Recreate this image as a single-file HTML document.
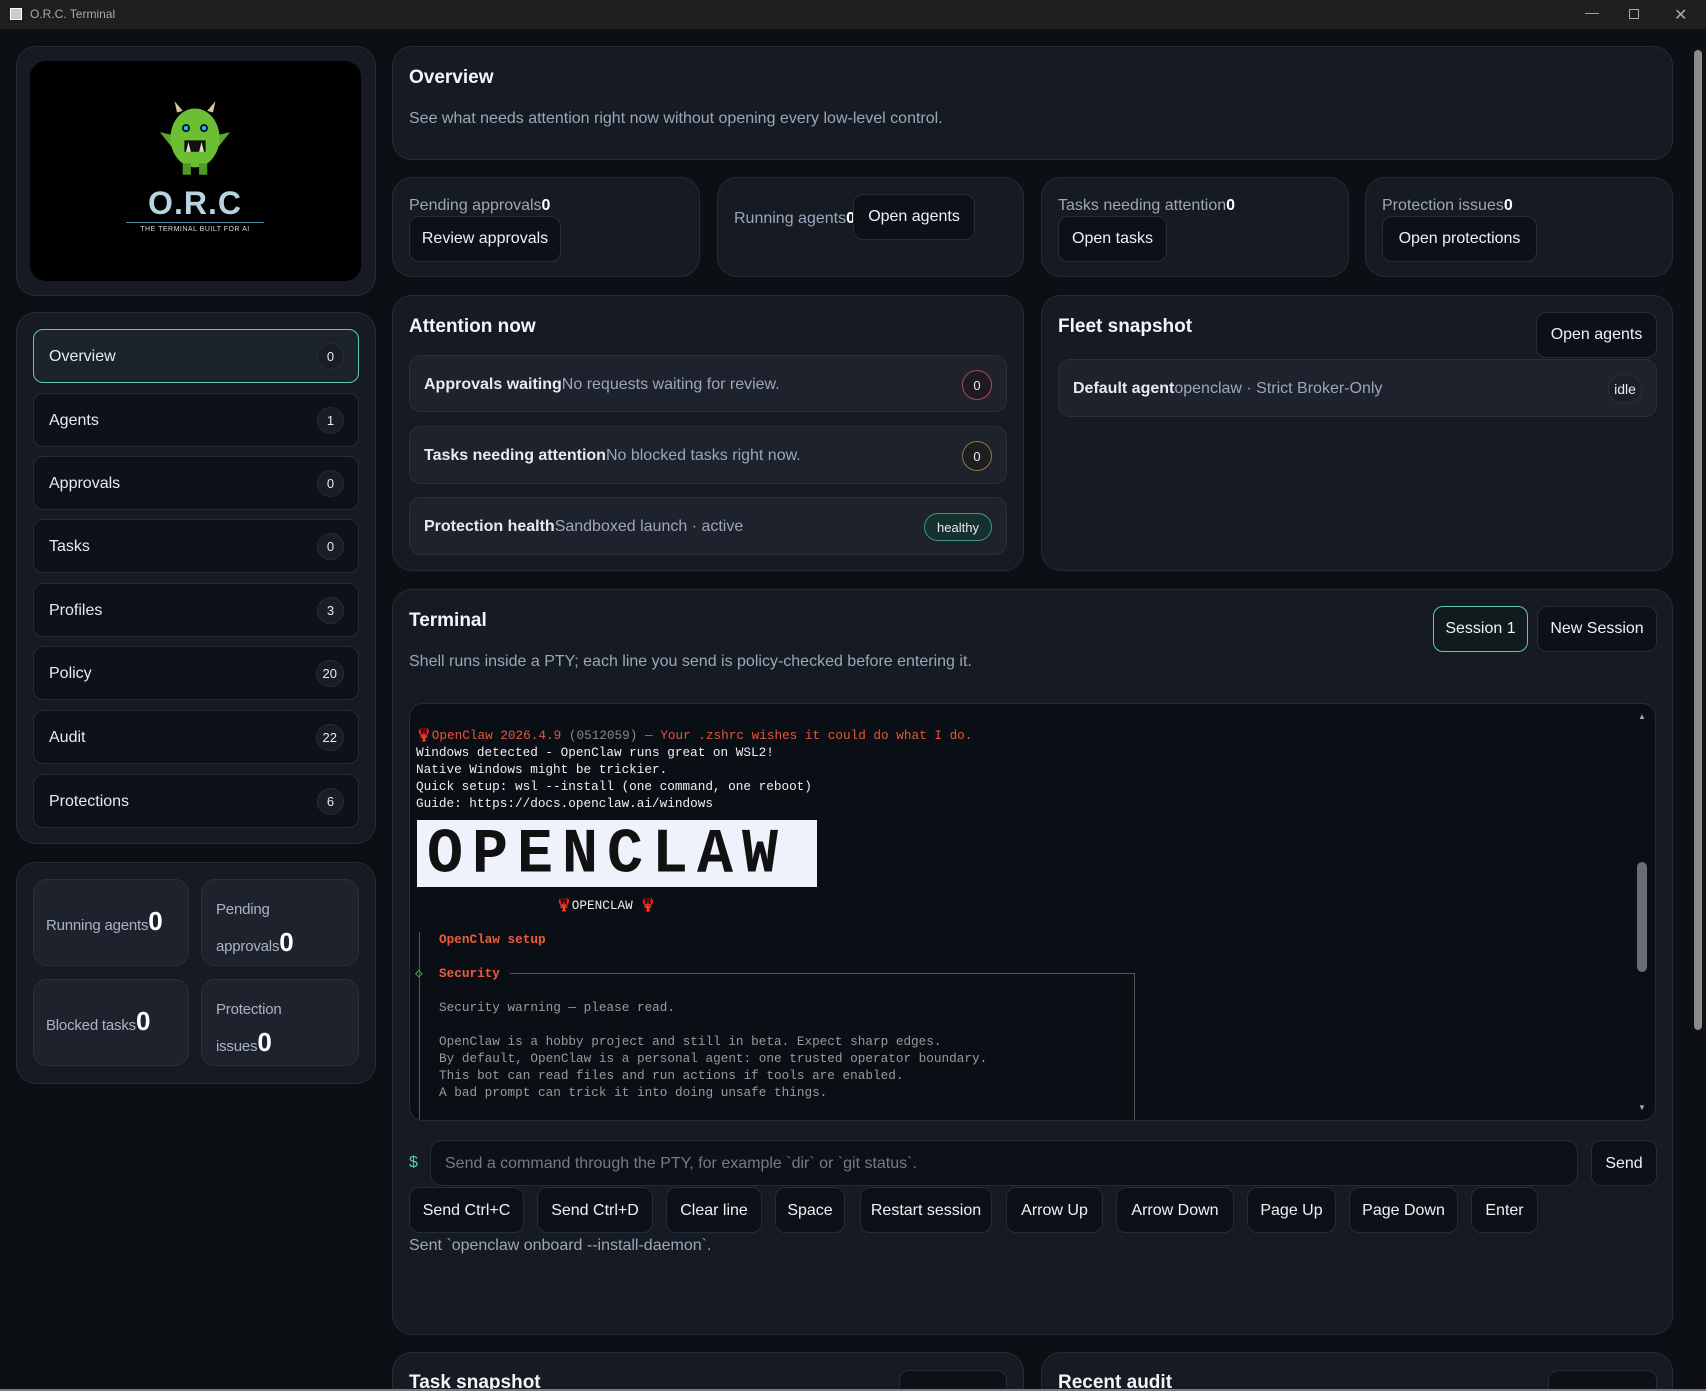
<!DOCTYPE html>
<html><head><meta charset="utf-8"><style>
*{box-sizing:border-box;margin:0;padding:0}
html,body{width:1706px;height:1391px;overflow:hidden}
body{background:#0c0f14;font-family:"Liberation Sans",sans-serif;color:#e6ebf2;position:relative}
.a{position:absolute}
.tb{left:0;top:0;width:1706px;height:29px;background:#1f1f1f;color:#a8a8a8;font-size:12px}
.card{position:absolute;background:#161a22;border:1px solid #262c37;border-radius:20px}
.btn{position:absolute;background:#0d1117;border:1px solid #262c37;border-radius:10px;color:#eef2f7;font-size:16px;display:flex;align-items:center;justify-content:center}
.nav{position:absolute;left:33px;width:326px;height:54px;background:#0e1218;border:1px solid #252b36;border-radius:10px;font-size:16px;display:flex;align-items:center;padding-left:15px;padding-top:2px}
.nav .c{position:absolute;right:14px;top:13px;min-width:27px;height:27px;border-radius:14px;background:#181d26;border:1px solid #262c37;font-size:13px;display:flex;align-items:center;justify-content:center;padding:0 6px}
.h{font-weight:bold;font-size:19px;color:#f2f5f9}
.m{color:#9aa8ba}
.tile{position:absolute;background:#1d222c;border:1px solid #2a303b;border-radius:14px;font-size:15px;color:#a9b4c3;padding:0 12px;letter-spacing:-0.2px}
.tile b{color:#fff;font-size:26px}
.row{position:absolute;left:409px;width:598px;background:#1d222c;border:1px solid #2a303b;border-radius:12px;font-size:16px;display:flex;align-items:center;padding-left:14px}
.mono{font-family:"Liberation Mono","DejaVu Sans Mono",monospace;font-size:12.7px;line-height:17px;white-space:pre}
</style></head><body>
<div class="a tb"><div class="a" style="left:10px;top:8px;width:12px;height:12px;background:#ccc;border:1px solid #fff"></div><span class="a" style="left:30px;top:7px">O.R.C. Terminal</span>
<span class="a" style="left:1585px;top:4px;font-size:14px">—</span><span class="a" style="left:1629px;top:9px;width:10px;height:10px;border:1px solid #aaa"></span><span class="a" style="left:1674px;top:5px;font-size:16px">✕</span></div>

<div class="card" style="left:16px;top:46px;width:360px;height:250px"></div>
<div class="a" style="left:30px;top:61px;width:331px;height:220px;background:#000;border-radius:16px">
<svg class="a" style="left:120px;top:40px" width="90" height="82" viewBox="0 0 110 100">
<path d="M33 14 L30 0 L40 12Z M77 14 L80 0 L70 12Z" fill="#d8c6a8"/>
<path d="M12 38 L30 42 L28 58Z M98 38 L80 42 L82 58Z" fill="#5aa82c"/>
<ellipse cx="55" cy="45" rx="30" ry="36" fill="#6cbf32"/>
<rect x="40" y="76" width="10" height="14" fill="#4f9a25"/><rect x="60" y="76" width="10" height="14" fill="#4f9a25"/>
<circle cx="44" cy="33" r="5" fill="#0a1a2a"/><circle cx="44" cy="33" r="2.5" fill="#19c3ff"/>
<circle cx="66" cy="33" r="5" fill="#0a1a2a"/><circle cx="66" cy="33" r="2.5" fill="#19c3ff"/>
<rect x="42" y="48" width="26" height="14" fill="#111"/><path d="M44 62 L47 50 L50 62Z M60 62 L63 50 L66 62Z" fill="#e5dac4"/>
</svg>
<div class="a" style="left:90px;top:124px;width:150px;text-align:center;font-weight:bold;font-size:32px;color:#b8d4e0;letter-spacing:1px">O.R.C</div>
<div class="a" style="left:96px;top:161px;width:138px;height:1px;background:#4c8aa0"></div>
<div class="a" style="left:80px;top:165px;width:170px;text-align:center;font-size:7px;color:#ddd;letter-spacing:.5px">THE TERMINAL BUILT FOR AI</div>
</div>

<div class="card" style="left:16px;top:312px;width:360px;height:532px"></div>
<div class="nav" style="top:329px;background:#1b2329;border-color:#5ec9b0">Overview<span class="c">0</span></div>
<div class="nav" style="top:393px">Agents<span class="c">1</span></div>
<div class="nav" style="top:456px">Approvals<span class="c">0</span></div>
<div class="nav" style="top:519px">Tasks<span class="c">0</span></div>
<div class="nav" style="top:583px">Profiles<span class="c">3</span></div>
<div class="nav" style="top:646px">Policy<span class="c">20</span></div>
<div class="nav" style="top:710px">Audit<span class="c">22</span></div>
<div class="nav" style="top:774px">Protections<span class="c">6</span></div>

<div class="card" style="left:16px;top:862px;width:360px;height:222px"></div>
<div class="tile" style="left:33px;top:879px;width:156px;height:87px;padding-top:26px">Running agents<b>0</b></div>
<div class="tile" style="left:201px;top:879px;width:158px;height:87px;padding:14px 50px 0 14px;line-height:32px">Pending approvals<b>0</b></div>
<div class="tile" style="left:33px;top:979px;width:156px;height:87px;padding-top:26px">Blocked tasks<b>0</b></div>
<div class="tile" style="left:201px;top:979px;width:158px;height:87px;padding:14px 50px 0 14px;line-height:32px">Protection issues<b>0</b></div>

<div class="card" style="left:392px;top:46px;width:1281px;height:114px"></div>
<div class="a h" style="left:409px;top:67px">Overview</div>
<div class="a m" style="left:409px;top:110px;font-size:16px">See what needs attention right now without opening every low-level control.</div>

<div class="card" style="left:392px;top:177px;width:308px;height:100px"></div>
<div class="a m" style="left:409px;top:197px;font-size:16px">Pending approvals<b style="color:#fff">0</b></div>
<div class="btn" style="left:409px;top:216px;width:152px;height:46px">Review approvals</div>
<div class="card" style="left:717px;top:177px;width:307px;height:100px"></div>
<div class="a m" style="left:734px;top:210px;font-size:16px">Running agents<b style="color:#fff">0</b></div>
<div class="btn" style="left:853px;top:194px;width:122px;height:46px">Open agents</div>
<div class="card" style="left:1041px;top:177px;width:308px;height:100px"></div>
<div class="a m" style="left:1058px;top:197px;font-size:16px">Tasks needing attention<b style="color:#fff">0</b></div>
<div class="btn" style="left:1058px;top:216px;width:109px;height:46px">Open tasks</div>
<div class="card" style="left:1365px;top:177px;width:308px;height:100px"></div>
<div class="a m" style="left:1382px;top:197px;font-size:16px">Protection issues<b style="color:#fff">0</b></div>
<div class="btn" style="left:1382px;top:216px;width:155px;height:46px">Open protections</div>

<div class="card" style="left:392px;top:295px;width:632px;height:276px"></div>
<div class="a h" style="left:409px;top:316px">Attention now</div>
<div class="row" style="top:355px;height:57px;padding-top:2px"><b>Approvals waiting</b><span class="m">No requests waiting for review.</span><span class="a" style="right:14px;top:14px;width:30px;height:30px;border-radius:15px;border:1px solid #a84a5a;background:#1e1a22;font-size:13px;display:flex;align-items:center;justify-content:center">0</span></div>
<div class="row" style="top:426px;height:58px;padding-top:2px"><b>Tasks needing attention</b><span class="m">No blocked tasks right now.</span><span class="a" style="right:14px;top:14px;width:30px;height:30px;border-radius:15px;border:1px solid #8c7a45;background:#1f1e1e;font-size:13px;display:flex;align-items:center;justify-content:center">0</span></div>
<div class="row" style="top:497px;height:58px;padding-top:2px"><b>Protection health</b><span class="m">Sandboxed launch · active</span><span class="a" style="right:14px;top:15px;width:68px;height:28px;border-radius:14px;border:1px solid #3d9a88;background:#15302d;font-size:13px;display:flex;align-items:center;justify-content:center">healthy</span></div>

<div class="card" style="left:1041px;top:295px;width:632px;height:276px"></div>
<div class="a h" style="left:1058px;top:316px">Fleet snapshot</div>
<div class="btn" style="left:1536px;top:312px;width:121px;height:46px">Open agents</div>
<div class="row" style="left:1058px;width:599px;top:359px;height:58px;padding-top:2px"><b>Default agent</b><span class="m">openclaw · Strict Broker-Only</span><span class="a" style="right:14px;top:14px;width:34px;height:30px;border-radius:15px;border:1px solid #2a303b;background:#1a1f28;font-size:14px;display:flex;align-items:center;justify-content:center">idle</span></div>

<div class="card" style="left:392px;top:589px;width:1281px;height:746px"></div>
<div class="a h" style="left:409px;top:610px">Terminal</div>
<div class="a m" style="left:409px;top:653px;font-size:16px">Shell runs inside a PTY; each line you send is policy-checked before entering it.</div>
<div class="btn" style="left:1433px;top:606px;width:95px;height:46px;border-color:#5ec9b0;background:#111a1c">Session 1</div>
<div class="btn" style="left:1537px;top:606px;width:120px;height:46px">New Session</div>
<div class="a" style="left:409px;top:703px;width:1247px;height:418px;background:#0a0f16;border:1px solid #262c37;border-radius:14px;overflow:hidden">
<div class="a" style="right:8px;top:8px;width:10px;height:400px"><div class="a" style="left:0;top:150px;width:10px;height:110px;background:#6a6e74;border-radius:5px"></div><div class="a" style="left:1px;top:0;font-size:8px;color:#aaa">▲</div><div class="a" style="left:1px;bottom:0;font-size:8px;color:#aaa">▼</div></div>
<div class="a mono" style="left:6px;top:23px;color:#f0f0f0"><span style="color:#e8553a">🦞OpenClaw 2026.4.9</span> <span style="color:#888">(0512059)</span> <span style="color:#e8553a">— Your .zshrc wishes it could do what I do.</span>
Windows detected - OpenClaw runs great on WSL2!
Native Windows might be trickier.
Quick setup: wsl --install (one command, one reboot)
Guide: https://docs.openclaw.ai/windows</div>
<div class="a" style="left:7px;top:116px;width:400px;height:67px;background:#eef2fb;overflow:hidden"><div class="a" style="left:10px;top:-6px;font-family:'Liberation Mono',monospace;font-weight:bold;font-size:60px;line-height:80px;color:#111;letter-spacing:9px;transform:scaleY(1.05);transform-origin:top left">OPENCLAW</div></div>
<div class="a mono" style="left:146px;top:193px;color:#eee">🦞OPENCLAW 🦞</div>
<div class="a" style="left:9px;top:228px;width:1px;height:190px;background:#555"></div>
<div class="a mono" style="left:29px;top:227px;color:#f05a3a;font-weight:bold">OpenClaw setup</div>
<div class="a mono" style="left:5px;top:261px;color:#4caf50">◇</div>
<div class="a mono" style="left:29px;top:261px;color:#f05a3a;font-weight:bold">Security</div>
<div class="a" style="left:100px;top:269px;width:624px;height:1px;background:#555"></div>
<div class="a" style="left:724px;top:269px;width:1px;height:150px;background:#555"></div>
<div class="a mono" style="left:29px;top:295px;color:#9a9a9a">Security warning — please read.

OpenClaw is a hobby project and still in beta. Expect sharp edges.
By default, OpenClaw is a personal agent: one trusted operator boundary.
This bot can read files and run actions if tools are enabled.
A bad prompt can trick it into doing unsafe things.</div>
</div>
<div class="a" style="left:409px;top:1154px;color:#5ec9b0;font-size:16px">$</div>
<div class="a" style="left:430px;top:1140px;width:1148px;height:46px;background:#0d1117;border:1px solid #262c37;border-radius:12px;color:#6f7b8b;font-size:16px;padding:14px 14px">Send a command through the PTY, for example `dir` or `git status`.</div>
<div class="btn" style="left:1591px;top:1140px;width:66px;height:46px;padding-top:2px">Send</div>
<div class="btn" style="left:409px;top:1187px;width:115px;height:46px;padding-top:2px">Send Ctrl+C</div>
<div class="btn" style="left:537px;top:1187px;width:116px;height:46px;padding-top:2px">Send Ctrl+D</div>
<div class="btn" style="left:666px;top:1187px;width:96px;height:46px;padding-top:2px">Clear line</div>
<div class="btn" style="left:775px;top:1187px;width:70px;height:46px;padding-top:2px">Space</div>
<div class="btn" style="left:860px;top:1187px;width:132px;height:46px;padding-top:2px">Restart session</div>
<div class="btn" style="left:1006px;top:1187px;width:97px;height:46px;padding-top:2px">Arrow Up</div>
<div class="btn" style="left:1116px;top:1187px;width:118px;height:46px;padding-top:2px">Arrow Down</div>
<div class="btn" style="left:1247px;top:1187px;width:89px;height:46px;padding-top:2px">Page Up</div>
<div class="btn" style="left:1349px;top:1187px;width:109px;height:46px;padding-top:2px">Page Down</div>
<div class="btn" style="left:1471px;top:1187px;width:67px;height:46px;padding-top:2px">Enter</div>
<div class="a m" style="left:409px;top:1237px;font-size:16px">Sent `openclaw onboard --install-daemon`.</div>

<div class="card" style="left:392px;top:1352px;width:632px;height:60px"></div>
<div class="a h" style="left:409px;top:1372px">Task snapshot</div>
<div class="btn" style="left:899px;top:1370px;width:108px;height:40px"></div>
<div class="card" style="left:1041px;top:1352px;width:632px;height:60px"></div>
<div class="a h" style="left:1058px;top:1372px">Recent audit</div>
<div class="btn" style="left:1548px;top:1370px;width:109px;height:40px"></div>
<div class="a" style="left:0;top:1389px;width:1706px;height:2px;background:#7a7a7a"></div>

<div class="a" style="left:1690px;top:29px;width:16px;height:1360px;background:#0c0f14"></div>
<div class="a" style="left:1694px;top:50px;width:8px;height:980px;background:#8b8b8b;border-radius:4px"></div>
</body></html>
